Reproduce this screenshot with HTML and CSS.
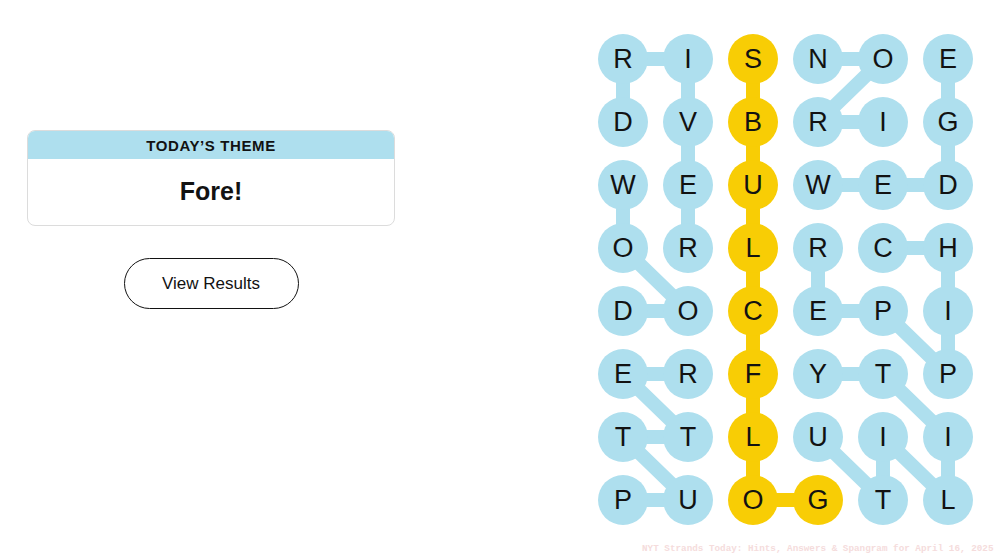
FILE: index.html
```html
<!DOCTYPE html>
<html lang="en">
<head>
  <meta charset="UTF-8">
  <meta name="viewport" content="width=device-width, initial-scale=1.0">
  <title>Strands</title>
  <link rel="stylesheet" href="styles.css">
</head>
<body>
  <div class="page">
    <div class="side">
      <div class="theme-card">
        <div class="theme-head">TODAY’S THEME</div>
        <div class="theme-body">Fore!</div>
      </div>
      <button class="results-btn">View Results</button>
    </div>

    <svg class="board" width="380" height="496" viewBox="0 0 380 496">
      <!-- found words -->
      <g class="link blue">
        <polyline points="27,90 27,27 92,27 92,216"/>
        <polyline points="27,153 27,216 92,279 27,279"/>
        <polyline points="27,468 92,468 27,405 92,405 27,342 92,342"/>
        <polyline points="287,90 222,90 287,27 222,27"/>
        <polyline points="222,153 352,153 352,27"/>
        <polyline points="287,216 352,216 352,342 287,279 222,279 222,216"/>
        <polyline points="222,405 287,468 287,405 352,468 352,405 287,342 222,342"/>
      </g>
      <!-- spangram -->
      <g class="link gold">
        <polyline points="222,468 157,468 157,27"/>
      </g>

      <g class="cell blue">
        <circle cx="27" cy="27" r="25"/><circle cx="92" cy="27" r="25"/>
        <circle cx="222" cy="27" r="25"/><circle cx="287" cy="27" r="25"/><circle cx="352" cy="27" r="25"/>
        <circle cx="27" cy="90" r="25"/><circle cx="92" cy="90" r="25"/>
        <circle cx="222" cy="90" r="25"/><circle cx="287" cy="90" r="25"/><circle cx="352" cy="90" r="25"/>
        <circle cx="27" cy="153" r="25"/><circle cx="92" cy="153" r="25"/>
        <circle cx="222" cy="153" r="25"/><circle cx="287" cy="153" r="25"/><circle cx="352" cy="153" r="25"/>
        <circle cx="27" cy="216" r="25"/><circle cx="92" cy="216" r="25"/>
        <circle cx="222" cy="216" r="25"/><circle cx="287" cy="216" r="25"/><circle cx="352" cy="216" r="25"/>
        <circle cx="27" cy="279" r="25"/><circle cx="92" cy="279" r="25"/>
        <circle cx="222" cy="279" r="25"/><circle cx="287" cy="279" r="25"/><circle cx="352" cy="279" r="25"/>
        <circle cx="27" cy="342" r="25"/><circle cx="92" cy="342" r="25"/>
        <circle cx="222" cy="342" r="25"/><circle cx="287" cy="342" r="25"/><circle cx="352" cy="342" r="25"/>
        <circle cx="27" cy="405" r="25"/><circle cx="92" cy="405" r="25"/>
        <circle cx="222" cy="405" r="25"/><circle cx="287" cy="405" r="25"/><circle cx="352" cy="405" r="25"/>
        <circle cx="27" cy="468" r="25"/><circle cx="92" cy="468" r="25"/>
        <circle cx="287" cy="468" r="25"/><circle cx="352" cy="468" r="25"/>
      </g>
      <g class="cell gold">
        <circle cx="157" cy="27" r="25"/><circle cx="157" cy="90" r="25"/>
        <circle cx="157" cy="153" r="25"/><circle cx="157" cy="216" r="25"/>
        <circle cx="157" cy="279" r="25"/><circle cx="157" cy="342" r="25"/>
        <circle cx="157" cy="405" r="25"/><circle cx="157" cy="468" r="25"/>
        <circle cx="222" cy="468" r="25"/>
      </g>

      <g class="letters">
        <text x="27" y="27">R</text><text x="92" y="27">I</text><text x="157" y="27">S</text>
        <text x="222" y="27">N</text><text x="287" y="27">O</text><text x="352" y="27">E</text>

        <text x="27" y="90">D</text><text x="92" y="90">V</text><text x="157" y="90">B</text>
        <text x="222" y="90">R</text><text x="287" y="90">I</text><text x="352" y="90">G</text>

        <text x="27" y="153">W</text><text x="92" y="153">E</text><text x="157" y="153">U</text>
        <text x="222" y="153">W</text><text x="287" y="153">E</text><text x="352" y="153">D</text>

        <text x="27" y="216">O</text><text x="92" y="216">R</text><text x="157" y="216">L</text>
        <text x="222" y="216">R</text><text x="287" y="216">C</text><text x="352" y="216">H</text>

        <text x="27" y="279">D</text><text x="92" y="279">O</text><text x="157" y="279">C</text>
        <text x="222" y="279">E</text><text x="287" y="279">P</text><text x="352" y="279">I</text>

        <text x="27" y="342">E</text><text x="92" y="342">R</text><text x="157" y="342">F</text>
        <text x="222" y="342">Y</text><text x="287" y="342">T</text><text x="352" y="342">P</text>

        <text x="27" y="405">T</text><text x="92" y="405">T</text><text x="157" y="405">L</text>
        <text x="222" y="405">U</text><text x="287" y="405">I</text><text x="352" y="405">I</text>

        <text x="27" y="468">P</text><text x="92" y="468">U</text><text x="157" y="468">O</text>
        <text x="222" y="468">G</text><text x="287" y="468">T</text><text x="352" y="468">L</text>
      </g>
    </svg>
  </div>

  <div class="watermark">NYT Strands Today: Hints, Answers &amp; Spangram for April 16, 2025</div>
</body>
</html>
```

FILE: styles.css
```css
body {
  margin: 0;
  font-family: 'Liberation Sans', Arial, sans-serif;
  color: #121212;
  background: #fff;
  height: 557px;
  overflow: hidden;
  position: relative;
}
.page {
  display: flex;
  justify-content: space-between;
  align-items: flex-start;
  padding: 0 24px 0 27px;
}
.side {
  width: 368px;
  padding-top: 130px;
  display: flex;
  flex-direction: column;
  align-items: center;
}
.theme-card {
  width: 100%;
  box-sizing: border-box;
  border: 1px solid #dcdcdc;
  border-radius: 8px;
  overflow: hidden;
}
.theme-head {
  background: #aedfee;
  height: 28px;
  line-height: 29px;
  text-align: center;
  font-size: 15px;
  font-weight: bold;
  letter-spacing: 0.6px;
}
.theme-body {
  height: 66px;
  line-height: 64px;
  text-align: center;
  font-size: 25px;
  font-weight: bold;
}
.results-btn {
  margin-top: 32px;
  width: 175px;
  height: 51px;
  border: 1.5px solid #121212;
  border-radius: 26px;
  background: #fff;
  color: #121212;
  font-family: 'Liberation Sans', Arial, sans-serif;
  font-size: 17px;
  cursor: pointer;
}
.board {
  margin-top: 32px;
  display: block;
}
.link polyline {
  fill: none;
  stroke-width: 14;
  stroke-linecap: round;
  stroke-linejoin: round;
}
.link.blue { stroke: #aedfee; }
.link.gold { stroke: #f8cd05; }
.cell.blue { fill: #aedfee; }
.cell.gold { fill: #f8cd05; }
.letters text {
  font-family: 'Liberation Sans', Arial, sans-serif;
  font-size: 27px;
  fill: #121212;
  text-anchor: middle;
  dominant-baseline: central;
}
.watermark {
  position: absolute;
  left: 642px;
  top: 543px;
  white-space: nowrap;
  font-family: 'Liberation Mono', monospace;
  font-size: 9.3px;
  font-weight: bold;
  color: #f5dcdc;
}
```
